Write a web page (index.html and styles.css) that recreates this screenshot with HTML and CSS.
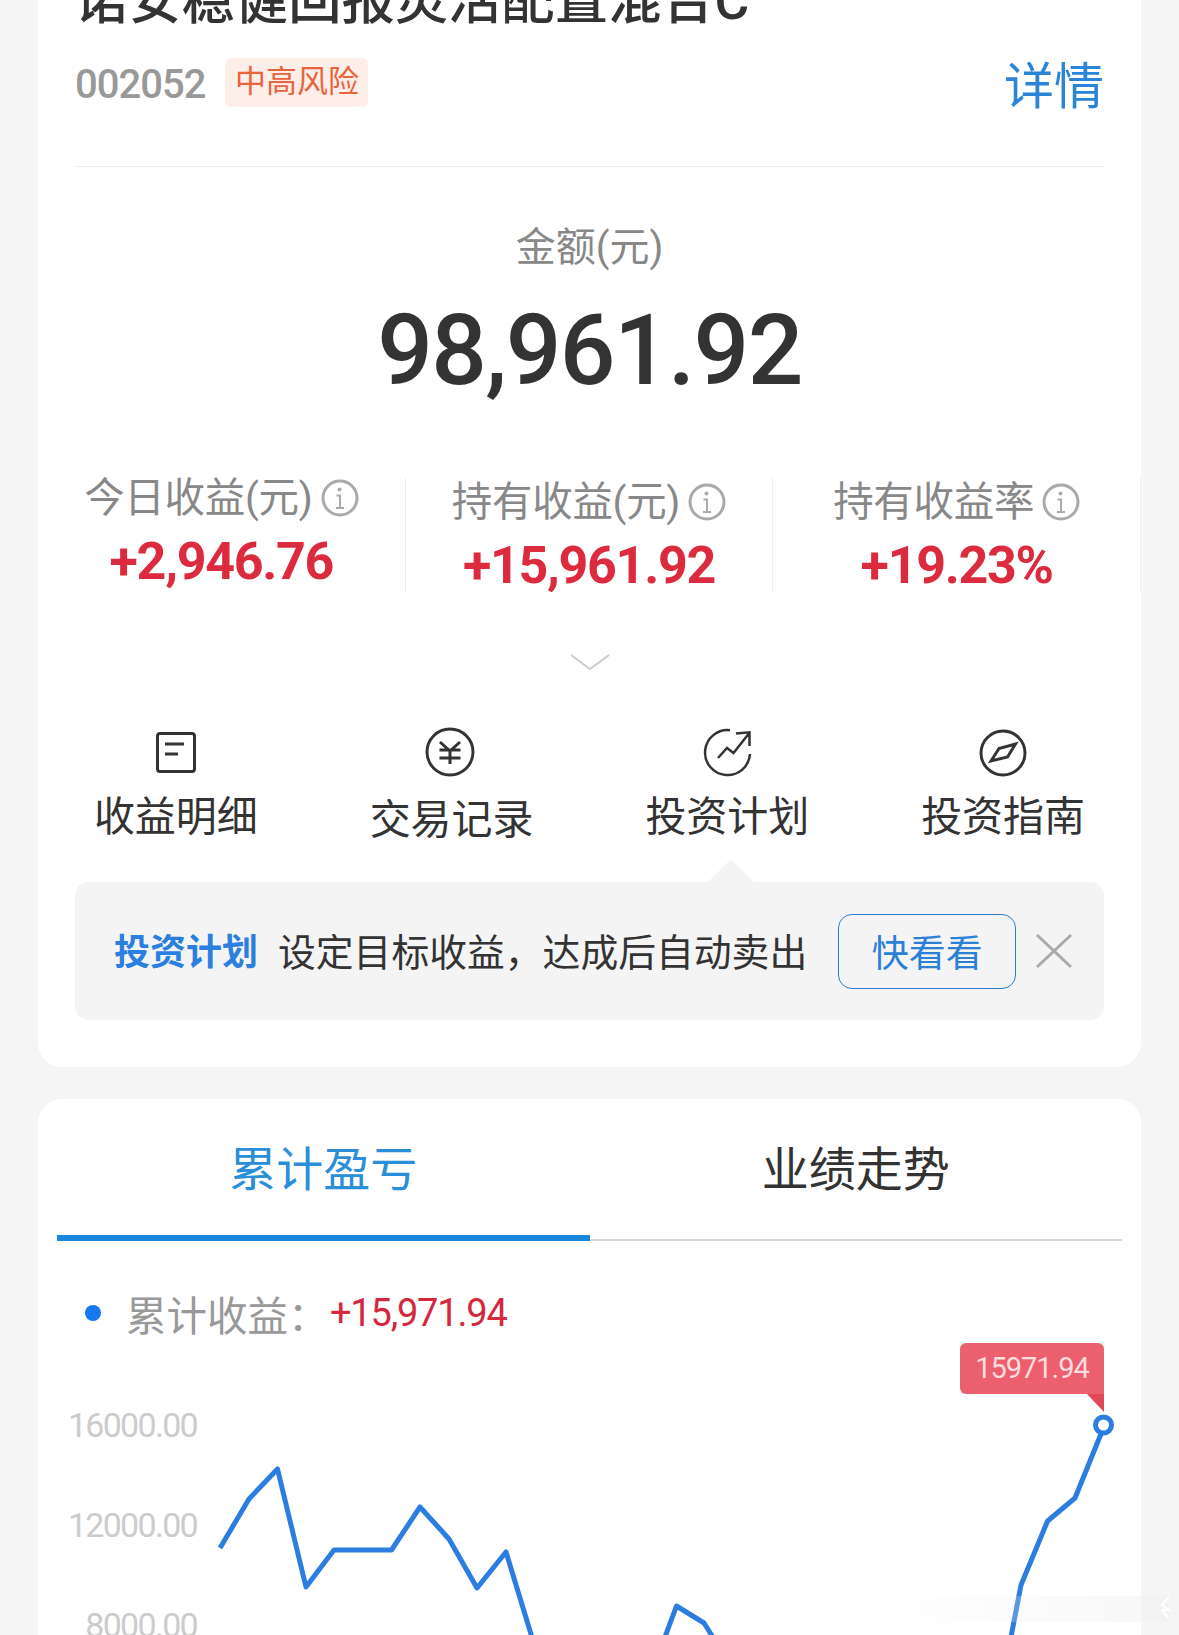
FILE: index.html
```html
<!DOCTYPE html>
<html lang="zh-CN">
<head>
    <meta charset="UTF-8">
    <meta name="viewport" content="width=device-width, initial-scale=1.0">
    <title>诺安稳健回报灵活配置混合C</title>
    <link rel="stylesheet" href="styles.css">
</head>
<body>

    <section class="card card-fund">
        <h1 class="fund-name">诺安稳健回报灵活配置混合C</h1>
        <div class="fund-meta">
            <span class="fund-code">002052</span>
            <span class="risk-tag">中高风险</span>
            <a class="detail-link">详情</a>
        </div>

        <div class="amount">
            <div class="amount-label">金额(元)</div>
            <div class="amount-value">98,961.92</div>
        </div>

        <div class="stats">
            <div class="stat stat-today">
                <div class="stat-label">今日收益(元)
                    <svg class="info-icon" viewBox="0 0 38 38"><circle cx="19" cy="19" r="17"/><path d="M15.5 16.5h3.5v12M15 29h8"/><circle class="info-dot" cx="18.5" cy="10.5" r="2"/></svg>
                </div>
                <div class="stat-value">+2,946.76</div>
            </div>
            <div class="stat">
                <div class="stat-label">持有收益(元)
                    <svg class="info-icon" viewBox="0 0 38 38"><circle cx="19" cy="19" r="17"/><path d="M15.5 16.5h3.5v12M15 29h8"/><circle class="info-dot" cx="18.5" cy="10.5" r="2"/></svg>
                </div>
                <div class="stat-value">+15,961.92</div>
            </div>
            <div class="stat">
                <div class="stat-label">持有收益率
                    <svg class="info-icon" viewBox="0 0 38 38"><circle cx="19" cy="19" r="17"/><path d="M15.5 16.5h3.5v12M15 29h8"/><circle class="info-dot" cx="18.5" cy="10.5" r="2"/></svg>
                </div>
                <div class="stat-value">+19.23%</div>
            </div>
        </div>

        <svg class="chevron" viewBox="0 0 40 16"><path d="M1 1l19 14L39 1"/></svg>

        <nav class="actions">
            <a class="action">
                <span class="action-icon">
                    <svg width="40" height="41" viewBox="0 0 40 41"><rect x="1.5" y="1.5" width="37" height="38" rx="2.5"/><path d="M9 12h19M9 22h13"/></svg>
                </span>
                <span class="action-label">收益明细</span>
            </a>
            <a class="action action-low">
                <span class="action-icon icon-yen">
                    <svg width="50" height="50" viewBox="0 0 50 50"><circle cx="25" cy="25" r="23"/><path d="M15 15l10 9 10-9M14.5 23h21M14.5 31h21M25 23v14"/></svg>
                </span>
                <span class="action-label">交易记录</span>
            </a>
            <a class="action">
                <span class="action-icon icon-thin">
                    <svg width="50" height="50" viewBox="0 0 50 50"><path d="M28 3.2A22.5 22.5 0 1 0 48 27"/><path d="M16 31l9-10 6.5 5L46.500 7M34 6.500l13.500-1.200V19"/></svg>
                </span>
                <span class="action-label">投资计划</span>
            </a>
            <a class="action">
                <span class="action-icon">
                    <svg width="50" height="50" viewBox="0 0 50 50"><circle cx="25" cy="26" r="22"/><path d="M13 34l8-12.500L37.500 17 29.500 30z"/></svg>
                </span>
                <span class="action-label">投资指南</span>
            </a>
        </nav>

        <div class="plan-tip">
            <strong class="plan-title">投资计划</strong>
            <span class="plan-text">设定目标收益，达成后自动卖出</span>
            <a class="plan-button">快看看</a>
            <svg class="plan-close" viewBox="0 0 38 36"><path d="M2 2l34 32M36 2L2 34"/></svg>
        </div>
    </section>

    <section class="card card-chart">
        <div class="tabs">
            <div class="tab tab-active">累计盈亏</div>
            <div class="tab">业绩走势</div>
        </div>

        <div class="legend">
            <span class="legend-dot"></span>
            <span class="legend-label">累计收益：</span>
            <span class="legend-value">+15,971.94</span>
        </div>

        <div class="chart">
            <svg class="chart-svg" width="1103" height="320" viewBox="0 0 1103 320">
                <text class="axis-label" x="159" y="103">16000.00</text>
                <text class="axis-label" x="159" y="203">12000.00</text>
                <text class="axis-label" x="159" y="303">8000.00</text>
                <polyline class="chart-line" points="182,214 211,165 239.500,135 268,253 296,216 353.500,216 382,173 411,205 439,254 468,218 496,310 560,380 610,380 627,303 638.500,272 666,289 676,305 720,380 950,380 972.600,305 983,251 1009.600,187 1037,164 1065,95"/>
                <circle class="chart-point" cx="1065.500" cy="91" r="8"/>
            </svg>
            <div class="chart-tooltip">15971.94</div>
        </div>
    </section>

    <div class="smear"></div>
    <svg class="watermark" width="12" height="24" viewBox="0 0 12 24"><path d="M10 1L3 9l7 5-7 0M3 14l7 9"/></svg>

</body>
</html>
```

FILE: styles.css
```css
* {
    margin: 0;
    padding: 0;
    box-sizing: border-box;
}

html,
body {
    height: 1635px;
    overflow: hidden;
}

body {
    position: relative;
    background: #f5f5f5;
    color: #333;
    font-family: Roboto, "Noto Sans CJK SC", sans-serif;
}

.card {
    margin: 0 38px;
    background: white;
    border-radius: 24px;
}

/* La carte du fonds commence au-dessus de la fenêtre */
.card-fund {
    margin-top: -39px;
    padding: 0 37px 47px;
    border-radius: 0 0 24px 24px;
}

.fund-name {
    font-size: 53.300px;
    font-weight: 500;
    line-height: 80px;
    white-space: nowrap;
}

.fund-meta {
    display: flex;
    align-items: center;
    height: 112px;
    padding-bottom: 57px;
    margin-top: 14px;
    border-bottom: 1px solid #eee;
}

.fund-code {
    margin-top: 5px;
    font-size: 40px;
    font-weight: 500;
    letter-spacing: -1px;
    color: #999;
}

.risk-tag {
    margin-left: 20px;
    padding: 0 9.500px;
    height: 49px;
    line-height: 47px;
    font-size: 31px;
    color: #e8643c;
    background: #fdeee8;
    border-radius: 6px;
}

.detail-link {
    margin-top: 10px;
    margin-left: auto;
    font-size: 50px;
    line-height: 56px;
    color: #2a84d8;
}

.amount {
    padding-top: 53px;
    text-align: center;
}

.amount-label {
    font-size: 40px;
    line-height: 56px;
    color: #888;
}

.amount-value {
    margin-top: 20px;
    font-size: 98px;
    font-weight: 500;
    line-height: 110px;
    letter-spacing: -1.600px;
}

.stats {
    display: grid;
    grid-template-columns: repeat(3, 1fr);
    height: 113px;
    margin: 72px -37px 0;
}

.stat {
    padding-top: 2px;
    border-right: 1px solid #eee;
    text-align: center;
}

.stat-today {
    padding-top: 0;
}

.stat-today .stat-label {
    margin-top: -2px;
}

.stat-label {
    display: flex;
    justify-content: center;
    align-items: center;
    gap: 8px;
    font-size: 40.500px;
    line-height: 44px;
    letter-spacing: -0.300px;
    color: #888;
}

.info-icon {
    width: 38px;
    height: 38px;
    fill: none;
    stroke: #aaa;
    stroke-width: 3;
}

.info-icon path {
    stroke-width: 2;
}

.info-dot {
    fill: #aaa;
    stroke: none;
}

.stat-value {
    margin-top: 16px;
    font-size: 52px;
    font-weight: 700;
    line-height: 52px;
    letter-spacing: -1.300px;
    color: #dc2b3f;
}

.chevron {
    display: block;
    width: 40px;
    height: 16px;
    margin: 63px auto 0;
    fill: none;
    stroke: #ccc;
    stroke-width: 2;
}

.actions {
    display: grid;
    grid-template-columns: repeat(4, 1fr);
    margin: 57px -37px 0;
}

.action {
    display: flex;
    flex-direction: column;
    align-items: center;
}

.action-icon {
    display: flex;
    align-items: center;
    height: 50px;
}

.action-icon svg {
    fill: none;
    stroke: #333;
    stroke-width: 3;
}

.action-icon.icon-thin svg {
    stroke-width: 2.500;
}

.icon-yen {
    margin-right: 3px;
}

.action-label {
    margin-top: 18px;
    font-size: 41px;
    line-height: 44px;
}

.action-low .action-label {
    margin-top: 21px;
}

.plan-tip {
    position: relative;
    display: flex;
    align-items: center;
    height: 138px;
    margin-top: 40px;
    padding-left: 39px;
    background: #f4f4f4;
    border-radius: 14px;
}

/* La petite flèche sous "投资计划" */
.plan-tip::before {
    content: "";
    position: absolute;
    top: -23px;
    left: 633px;
    width: 46px;
    height: 23px;
    background: #f4f4f4;
    clip-path: polygon(50% 0, 100% 100%, 0 100%);
}

.plan-title {
    margin-top: -4px;
    font-size: 36px;
    font-weight: 700;
    color: #2b7fe0;
}

.plan-text {
    margin-top: -4px;
    margin-left: 20px;
    font-size: 37.800px;
    white-space: nowrap;
}

.plan-button {
    width: 178px;
    height: 75px;
    margin-left: 31px;
    border: 1px solid #2b7fc8;
    border-radius: 14px;
    font-size: 37px;
    line-height: 79px;
    text-align: center;
    color: #2b7fd6;
}

.plan-close {
    width: 38px;
    height: 36px;
    margin-left: 19px;
    fill: none;
    stroke: #aaa;
    stroke-width: 3;
}

.card-chart {
    height: 600px;
    margin-top: 32px;
    padding: 0 19px;
}

.tabs {
    display: flex;
}

.tab {
    flex: 1;
    height: 142px;
    padding-top: 48px;
    border-bottom: 2px solid #d8d8d8;
    font-size: 47px;
    line-height: 46px;
    text-align: center;
}

.tab-active {
    border-bottom: 6px solid #1a86de;
    color: #2a8fd8;
}

.legend {
    display: flex;
    align-items: center;
    height: 42px;
    margin-top: 51px;
    padding-left: 28px;
}

.legend-dot {
    width: 16px;
    height: 16px;
    background: #1677f0;
    border-radius: 50%;
}

.legend-label {
    width: 204px;
    margin-left: 25px;
    font-size: 40.500px;
    white-space: nowrap;
    color: #999;
}

.legend-value {
    font-size: 38px;
    letter-spacing: -1.200px;
    color: #d4283f;
}

.chart {
    position: relative;
    margin: 0 -19px 0;
}

.chart-svg {
    display: block;
    overflow: hidden;
}

.axis-label {
    font-size: 34px;
    letter-spacing: -1.700px;
    fill: #ccc;
    text-anchor: end;
}

.chart-line {
    fill: none;
    stroke: #2b7de0;
    stroke-width: 5;
    stroke-linejoin: round;
}

.chart-point {
    fill: white;
    stroke: #2b7de0;
    stroke-width: 5;
}

.chart-tooltip {
    position: absolute;
    top: 9px;
    left: 922px;
    width: 144px;
    height: 51px;
    background: #ec5f6e;
    border-radius: 6px 6px 0 6px;
    font-size: 29px;
    line-height: 51px;
    letter-spacing: -1px;
    text-align: center;
    color: #fbdcdf;
}

.chart-tooltip::after {
    content: "";
    position: absolute;
    top: 47px;
    right: 0;
    width: 17px;
    height: 22px;
    background: #e04858;
    clip-path: polygon(0 18%, 100% 18%, 100% 100%);
}

/* Traînée de filigrane en bas à droite de la capture */
.smear {
    position: absolute;
    top: 1596px;
    left: 880px;
    width: 289px;
    height: 26px;
    background: linear-gradient(to right, rgba(245, 245, 245, 0), rgba(240, 240, 240, 0.500));
    pointer-events: none;
}

.watermark {
    position: absolute;
    top: 1596px;
    left: 1159px;
    fill: none;
    stroke: white;
    stroke-width: 2;
}
```
